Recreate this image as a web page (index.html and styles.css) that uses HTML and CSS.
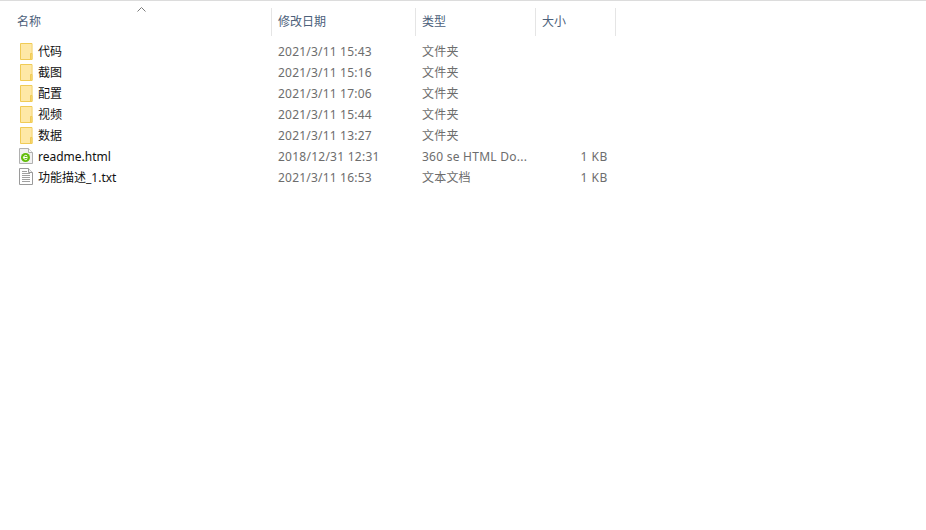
FILE: index.html
```html
<!DOCTYPE html>
<html lang="zh-CN">
<head>
<meta charset="utf-8">
<title>文件列表</title>
<link rel="stylesheet" href="styles.css">
</head>
<body>
<svg class="defs" width="0" height="0" aria-hidden="true">
  <symbol id="folder" viewBox="0 0 16 19">
    <path d="M2.500 1.500h11.500v16h-11.500z" fill="#fde394" stroke="#f0cb55"/>
    <path d="M3 2h10.500v9.500H12V17H3z" fill="#fee8a6"/>
    <path d="M12.500 11.500h1.500v6h-1.500z" fill="#fbdc80" stroke="#f0cb55"/>
  </symbol>
  <symbol id="html" viewBox="0 0 16 19">
    <path d="M1.500 1.500h9l4 4v11h-13z" fill="#f1f1f1" stroke="#b0b0b0"/>
    <path d="M10.500 1.500v4h4" fill="#fafafa" stroke="#b0b0b0"/>
    <circle cx="7.500" cy="10.500" r="4.500" fill="#62bd0a"/>
    <path d="M5.500 10.500h4M9.300 9.200A2.100 2.100 0 1 0 9.300 11.800" fill="none" stroke="#fff" stroke-width="1"/>
  </symbol>
  <symbol id="txt" viewBox="0 0 16 19">
    <path d="M1.500.5h9l4 4v12h-13z" fill="#fff" stroke="#9a9a9a"/>
    <path d="M10.500.5v4h4" fill="#f0f0f0" stroke="#9a9a9a"/>
    <path d="M4 3.500h5M4 5.500h8M4 7.500h8M4 9.500h8M4 11.500h8M4 13.500h8" stroke="#a0a0a0"/>
  </symbol>
</svg>
<main class="explorer">
  <header class="head">
    <div class="hcell hname">名称<span class="sort"><svg width="9" height="5" viewBox="0 0 9 5"><path d="M.5 4.500l4-4 4 4" fill="none" stroke="#7a7a7a"/></svg></span></div>
    <div class="hcell">修改日期</div>
    <div class="hcell">类型</div>
    <div class="hcell">大小</div>
  </header>
  <ul class="rows">
    <li class="row"><span class="name"><svg class="icon"><use href="#folder"/></svg>代码</span><span class="meta">2021/3/11 15:43</span><span class="meta">文件夹</span><span class="size"></span></li>
    <li class="row"><span class="name"><svg class="icon"><use href="#folder"/></svg>截图</span><span class="meta">2021/3/11 15:16</span><span class="meta">文件夹</span><span class="size"></span></li>
    <li class="row"><span class="name"><svg class="icon"><use href="#folder"/></svg>配置</span><span class="meta">2021/3/11 17:06</span><span class="meta">文件夹</span><span class="size"></span></li>
    <li class="row"><span class="name"><svg class="icon"><use href="#folder"/></svg>视频</span><span class="meta">2021/3/11 15:44</span><span class="meta">文件夹</span><span class="size"></span></li>
    <li class="row"><span class="name"><svg class="icon"><use href="#folder"/></svg>数据</span><span class="meta">2021/3/11 13:27</span><span class="meta">文件夹</span><span class="size"></span></li>
    <li class="row"><span class="name"><svg class="icon"><use href="#html"/></svg>readme.html</span><span class="meta"><span class="latin">2018/12/31 12:31</span></span><span class="meta"><span class="latin">360 se HTML Do...</span></span><span class="size">1 KB</span></li>
    <li class="row"><span class="name"><svg class="icon"><use href="#txt"/></svg>功能描述_1.txt</span><span class="meta">2021/3/11 16:53</span><span class="meta">文本文档</span><span class="size">1 KB</span></li>
  </ul>
</main>
</body>
</html>
```
FILE: styles.css
```css
* { box-sizing: border-box; }
html, body { margin: 0; height: 100%; background: #fff; }
body {
  font-family: "Noto Sans", "Noto Sans CJK SC", sans-serif;
  font-size: 12px;
  line-height: 21px;
  overflow: hidden;
}
.defs { position: absolute; }
.explorer { border-top: 1px solid #dcdcdc; }
.head, .row {
  display: grid;
  grid-template-columns: 272px 144px 120px 80px;
}
.head { padding-top: 7px; height: 35px; }
.hcell {
  position: relative;
  height: 28px;
  padding-left: 6px;
  line-height: 28px;
  color: #4c607a;
  border-right: 1px solid #e5e5e5;
}
.hname { padding-left: 17px; }
.sort { position: absolute; left: 137px; top: -1px; line-height: 0; }
.rows { list-style: none; margin: 5px 0 0; padding: 0; }
.row { height: 21px; }
.name { display: flex; align-items: center; padding-left: 18px; color: #111; }
.icon { width: 16px; height: 19px; margin-right: 4px; flex: none; }
.meta { padding-left: 6px; color: #6d6d6d; letter-spacing: 0.2px; white-space: nowrap; }
.latin { letter-spacing: 0.25px; }
.size { text-align: right; padding-right: 8px; color: #6d6d6d; letter-spacing: 0.6px; }
```
